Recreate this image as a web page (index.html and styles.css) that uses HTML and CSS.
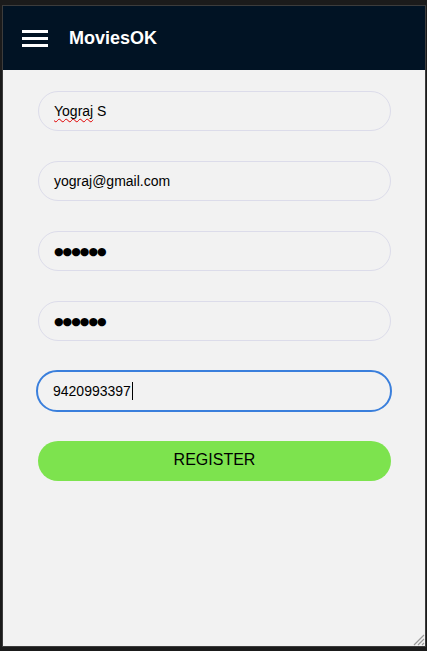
FILE: index.html
```html
<!DOCTYPE html>
<html lang="en">
<head>
<meta charset="utf-8">
<title>MoviesOK</title>
<link rel="stylesheet" href="styles.css">
</head>
<body>
<div class="frame">
  <header class="topbar">
    <button class="menu" aria-label="Menu">
      <span></span><span></span><span></span>
    </button>
    <h1 class="brand">MoviesOK</h1>
  </header>
  <main class="content">
    <form class="form">
      <div class="field"><span class="spell">Yograj</span>&nbsp;S</div>
      <div class="field">yograj@gmail.com</div>
      <div class="field dots">&#9679;&#9679;&#9679;&#9679;&#9679;&#9679;</div>
      <div class="field dots">&#9679;&#9679;&#9679;&#9679;&#9679;&#9679;</div>
      <div class="field focused"><span class="caret">9420993397</span></div>
      <button type="button" class="register">REGISTER</button>
    </form>
  </main>
  <svg class="grip" width="14" height="14" viewBox="0 0 14 14">
    <path d="M13 3 L3 13 M13 7 L7 13 M13 11 L11 13" stroke="#9a9a9a" stroke-width="1.2"/>
  </svg>
</div>
</body>
</html>
```
FILE: styles.css
```css
* { box-sizing: border-box; }
html, body { margin: 0; height: 100%; }
body {
  background: #1b1b1b;
  padding: 5px 1px 4px 2px;
  font-family: "Liberation Sans", Arial, sans-serif;
}
.frame {
  position: relative;
  height: 642px;
  border: 1px solid #3c3c3c;
  background: #f2f2f2;
  display: flex;
  flex-direction: column;
}
.topbar {
  height: 64px;
  background: #011324;
  display: flex;
  align-items: center;
  padding-left: 19px;
  flex-shrink: 0;
}
.menu {
  width: 26px;
  height: 17px;
  padding: 0;
  border: 0;
  background: none;
  display: flex;
  flex-direction: column;
  justify-content: space-between;
  margin-right: 21px;
  margin-top: 1px;
}
.menu span {
  display: block;
  height: 3px;
  width: 26px;
  background: #fff;
}
.brand {
  margin: 0;
  color: #fff;
  font-size: 18px;
  font-weight: bold;
}
.content {
  flex: 1;
  padding: 21px 34px 0 35px;
}
.form {
  display: flex;
  flex-direction: column;
  gap: 30px;
}
.field {
  height: 40px;
  border: 1px solid #dcdcea;
  border-radius: 20px;
  padding: 0 15px;
  display: flex;
  align-items: center;
  font-size: 14px;
  color: #000;
  background: #f2f2f2;
}
.spell {
  text-decoration: underline wavy #e00000;
  text-decoration-thickness: 1px;
  text-decoration-skip-ink: none;
  text-underline-offset: 2px;
}
.dots {
  font-family: "DejaVu Sans", sans-serif;
  font-size: 11px;
  letter-spacing: -1px;
}
.focused {
  height: 42px;
  margin: -1px -1px 0 -2px;
  border: 2px solid #3a7fdc;
  border-radius: 21px;
}
.caret {
  border-right: 1px solid #000;
  padding-right: 1px;
  line-height: 18px;
}
.register {
  height: 40px;
  border: 0;
  border-radius: 20px;
  background: #7de34e;
  font-family: "Liberation Sans", Arial, sans-serif;
  font-size: 16px;
  color: #000;
  margin-top: -1px;
  padding: 0 0 3px;
}
.grip {
  position: absolute;
  right: 0;
  bottom: 0;
}
```
